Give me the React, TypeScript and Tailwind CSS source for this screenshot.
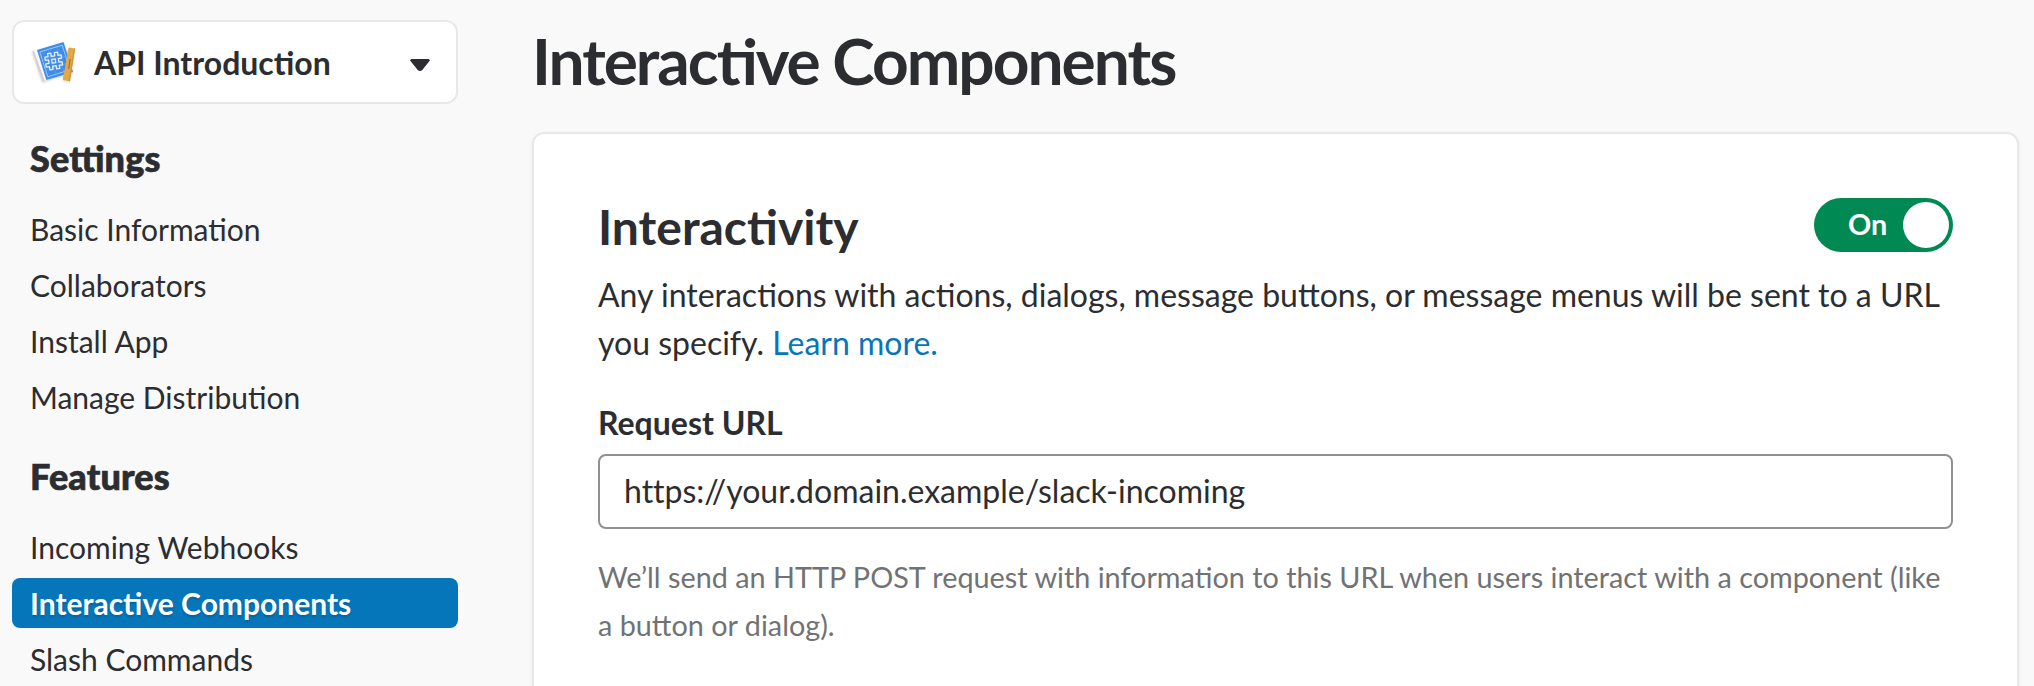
const settings = ["Basic Information", "Collaborators", "Install App", "Manage Distribution"];
const features = ["Incoming Webhooks", "Interactive Components", "Slash Commands"];

function AppIcon() {
  return (
    <svg width="48" height="48" viewBox="0 0 48 48" className="mt-[6px] shrink-0 drop-shadow-[0_1px_1px_rgba(0,0,0,0.2)]">
      <path d="M1.300 10.500 L6.500 8.800 L18 38.500 L12.800 40.300 Q11.600 40.500 11 39.400 Z" fill="#fafafa" />
      <path d="M1.300 10.500 L3 9.900 L14 39.900 L12.800 40.300 Q11.600 40.500 11 39.400 Z" fill="#d2d2d2" />
      <path d="M6 9 L32.500 1 L42 31 L15.300 39 Z" fill="#3f8de9" />
      <path d="M8.800 11 L31.200 4.200 L39 28.800 L16.800 35.800 Z" fill="none" stroke="#a9cefa" strokeWidth=".9" />
      <path d="M9.600 13.700 L13.600 12.500 L13 9.900 M11 22 L35 15 M14 29 L37 22 M17 8.500 L25 33.500 M26 6 L33 31" fill="none" stroke="#5b9ef0" strokeWidth=".7" />
      <path
        transform="translate(22.700 20) rotate(-8)"
        d="M-5 -8.200 h3.200 v3.200 h3.600 v-3.200 h3.200 v3.200 h3.200 v3.200 h-3.200 v3.600 h3.200 v3.200 h-3.200 v3.200 h-3.200 v-3.200 h-3.600 v3.200 h-3.200 v-3.200 h-3.200 v-3.200 h3.200 v-3.600 h-3.200 v-3.200 h3.200 Z M-1.800 -1.800 h3.600 v3.600 h-3.600 Z"
        fill="none"
        stroke="#e6f1ff"
        strokeWidth="1.300"
        strokeLinejoin="round"
      />
      <path d="M37.600 6.600 L44 7.600 L38.800 40.300 L31.800 38.800 Z" fill="#e3a843" />
      <path d="M43 7.500 L44 7.600 L38.800 40.300 L37.700 40 Z" fill="#cf9233" />
      <path d="M39.200 18 L37.600 28" stroke="#9a7230" strokeWidth="1.200" />
    </svg>
  );
}

function NavSection({ title, items }: { title: string; items: string[] }) {
  return (
    <section>
      <h2 className="px-[18px] text-[36px] leading-[44px] font-black tracking-[0.15px] [-webkit-text-stroke:0.7px_#2c2d30] [font-feature-settings:'liga'_1]">
        {title}
      </h2>
      <ul className="mt-[24px] flex flex-col gap-[6px]">
        {items.map((item) => (
          <li
            key={item}
            className={
              item === "Interactive Components"
                ? "h-[50px] rounded-[8px] bg-[#0576b9] px-[18px] text-[30px] leading-[50px] font-bold text-white [text-shadow:0_2px_2px_rgba(0,0,0,0.15)]"
                : "h-[50px] px-[18px] text-[30px] leading-[50px]"
            }
          >
            {item}
          </li>
        ))}
      </ul>
    </section>
  );
}

export default function App() {
  return (
    <div className="flex h-[686px] w-[2034px] overflow-hidden bg-[#f9f9f9] pl-3 font-['Lato',sans-serif] text-[#2c2d30]">
      <aside className="w-[446px] shrink-0 pt-5">
        <button className="flex h-[84px] w-full items-center rounded-[12px] border-2 border-[#e8e8e8] bg-white pr-[26px] pl-[17px] text-left">
          <AppIcon />
          <span className="ml-[15px] grow pt-[2px] text-[32px] leading-[40px] font-bold">API Introduction</span>
          <svg width="20" height="12" viewBox="0 0 20 12" className="mt-[6px]">
            <path d="M1.500 0 H18.500 Q20.500 .6 19.300 2.300 L12.300 11 Q10 13 7.700 11 L.7 2.300 Q-.5 .6 1.500 0 Z" fill="#2c2d30" />
          </svg>
        </button>
        <div className="mt-[32px] flex flex-col gap-[32px]">
          <NavSection title="Settings" items={settings} />
          <NavSection title="Features" items={features} />
        </div>
      </aside>
      <main className="ml-[74px] w-[1487px] shrink-0">
        <h1 className="mt-[21px] text-[64px] leading-[80px] font-bold tracking-[-2px] [font-feature-settings:'liga'_1]">
          Interactive Components
        </h1>
        <div className="mt-[31px] h-[600px] rounded-[12px] border-2 border-[#e8e8e8] bg-white px-[64px] pt-[64px] shadow-[0_2px_4px_rgba(0,0,0,0.06)]">
          <div className="flex h-[73px] items-start justify-between">
            <h2 className="mt-[-1px] text-[48px] leading-[60px] font-bold">Interactivity</h2>
            <div className="flex h-[54px] w-[139px] items-center justify-between rounded-full bg-[#008952] pr-1 pl-[34px] text-[28.8px] font-bold text-white">
              <span>On</span>
              <span className="size-[46px] rounded-full bg-white" />
            </div>
          </div>
          <p className="text-[32px] leading-[48px]">
            Any interactions with actions, dialogs, message buttons, or message menus will be sent to a URL
            <br />
            you specify. <a className="text-[#0576b9]">Learn more.</a>
          </p>
          <div className="mt-[32px] text-[32px] leading-[48px] font-bold">Request URL</div>
          <div className="mt-[7px] h-[75px] rounded-[8px] border-2 border-[#919193] pl-[24px] text-[32px] leading-[70px] [font-variant-ligatures:none]">
            https://your.domain.example/slack-incoming
          </div>
          <p className="mt-[24px] text-[28.8px] leading-[48px] whitespace-nowrap text-[#717274]">
            We’ll send an HTTP POST request with information to this URL when users interact with a component (like
            <br />a button or dialog).
          </p>
        </div>
      </main>
    </div>
  );
}
